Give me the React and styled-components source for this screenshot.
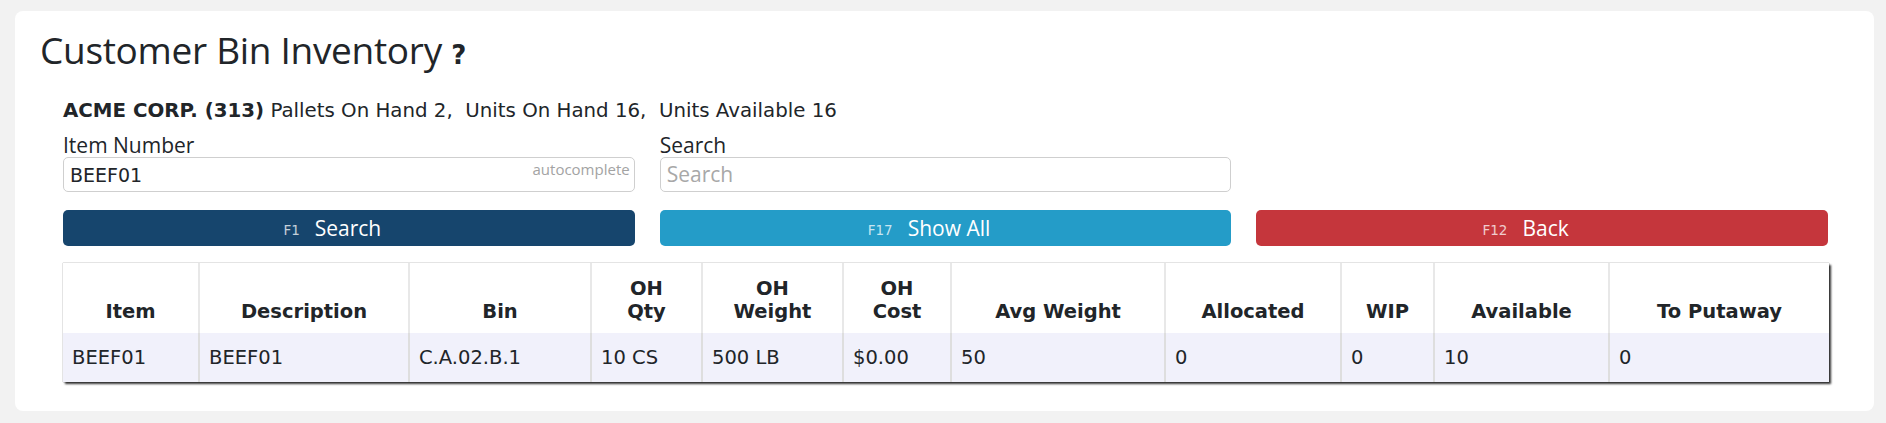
import styled, { createGlobalStyle } from 'styled-components'

const GlobalStyle = createGlobalStyle`
  html, body {
    margin: 0;
    padding: 0;
    background: #f2f2f2;
  }
  body {
    font-family: 'DejaVu Sans', Verdana, sans-serif;
    color: #212529;
  }
`

const columns = [
  { key: 'item', label: 'Item', width: 136 },
  { key: 'desc', label: 'Description', width: 210 },
  { key: 'bin', label: 'Bin', width: 182 },
  { key: 'qty', label: ['OH', 'Qty'], width: 111 },
  { key: 'weight', label: ['OH', 'Weight'], width: 141 },
  { key: 'cost', label: ['OH', 'Cost'], width: 108 },
  { key: 'avg', label: 'Avg Weight', width: 214 },
  { key: 'alloc', label: 'Allocated', width: 176 },
  { key: 'wip', label: 'WIP', width: 93 },
  { key: 'avail', label: 'Available', width: 175 },
  { key: 'putaway', label: 'To Putaway', width: 220 },
]

const rows = [
  {
    item: 'BEEF01',
    desc: 'BEEF01',
    bin: 'C.A.02.B.1',
    qty: '10 CS',
    weight: '500 LB',
    cost: '$0.00',
    avg: '50',
    alloc: '0',
    wip: '0',
    avail: '10',
    putaway: '0',
  },
]

const buttons = [
  { key: 'F1', text: 'Search', variant: 'primary' },
  { key: 'F17', text: 'Show All', variant: 'info' },
  { key: 'F12', text: 'Back', variant: 'danger' },
]

const App = () => {
  return (
    <>
      <GlobalStyle />
      <Page>
        <Card>
          <Title>
            Customer Bin Inventory <Help>?</Help>
          </Title>
          <Content>
            <Summary>
              <strong>ACME CORP. (313)</strong> Pallets On Hand 2,&nbsp; Units On Hand 16,&nbsp; Units Available 16
            </Summary>
            <Grid>
              <Field>
                <Label>Item Number</Label>
                <InputWrap>
                  <Input defaultValue='BEEF01' />
                  <Hint>autocomplete</Hint>
                </InputWrap>
              </Field>
              <Field>
                <Label>Search</Label>
                <Input placeholder='Search' />
              </Field>
            </Grid>
            <ButtonGrid>
              {buttons.map((b) => (
                <KeyButton key={b.key} $variant={b.variant}>
                  <KeyHint>{b.key}</KeyHint>
                  {b.text}
                </KeyButton>
              ))}
            </ButtonGrid>
            <Table>
              <colgroup>
                {columns.map((c) => (
                  <Col key={c.key} $width={c.width} />
                ))}
              </colgroup>
              <thead>
                <tr>
                  {columns.map((c) => (
                    <Th key={c.key}>
                      {Array.isArray(c.label) ? (
                        <>
                          {c.label[0]}
                          <br />
                          {c.label[1]}
                        </>
                      ) : (
                        c.label
                      )}
                    </Th>
                  ))}
                </tr>
              </thead>
              <tbody>
                {rows.map((r, i) => (
                  <tr key={i}>
                    {columns.map((c) => (
                      <Td key={c.key}>{r[c.key]}</Td>
                    ))}
                  </tr>
                ))}
              </tbody>
            </Table>
          </Content>
        </Card>
      </Page>
    </>
  )
}

const variants = {
  primary: '#16456d',
  info: '#249cc8',
  danger: '#c5363c',
}

const Page = styled.div`
  width: 1886px;
  height: 423px;
  box-sizing: border-box;
  padding: 11px 12px 12px 15px;
`

const Card = styled.section`
  background: #fff;
  border-radius: 8px;
  height: 100%;
  box-sizing: border-box;
  padding: 17px 46px 0 25px;
`

const Title = styled.h1`
  margin: 0;
  font-family: 'Open Sans', sans-serif;
  font-weight: 400;
  font-size: 37px;
  line-height: 44px;
  color: #212529;
  letter-spacing: -0.3px;
`

const Help = styled.span`
  font-family: 'DejaVu Sans', sans-serif;
  font-weight: 700;
  font-size: 26px;
`

const Content = styled.div`
  margin-left: 23px;
`

const Summary = styled.p`
  margin: 21px 0 9px;
  font-size: 19.8px;
  line-height: 26px;
  strong {
    font-weight: 700;
  }
`

const Grid = styled.div`
  display: grid;
  grid-template-columns: repeat(3, 1fr);
  column-gap: 25px;
`

const Field = styled.div`
  display: flex;
  flex-direction: column;
`

const Label = styled.label`
  font-family: 'Open Sans', sans-serif;
  font-size: 21px;
  line-height: 24px;
  color: #212529;
`

const InputWrap = styled.div`
  position: relative;
`

const Input = styled.input`
  width: 100%;
  height: 35px;
  box-sizing: border-box;
  border: 1px solid #cfcfcf;
  border-radius: 5px;
  padding: 0 6px;
  font-family: 'DejaVu Sans', sans-serif;
  font-size: 19px;
  color: #212529;
  outline: none;
  &::placeholder {
    font-family: 'Open Sans', sans-serif;
    font-size: 21px;
    color: #a8a8a8;
  }
`

const Hint = styled.span`
  position: absolute;
  right: 5px;
  top: 2px;
  font-family: 'Open Sans', sans-serif;
  font-size: 15px;
  color: #a3a3a3;
`

const ButtonGrid = styled.div`
  display: grid;
  grid-template-columns: repeat(3, 1fr);
  column-gap: 25px;
  margin-top: 18px;
`

const KeyButton = styled.button`
  height: 36px;
  border: none;
  border-radius: 5px;
  background: ${(p) => variants[p.$variant]};
  color: #fff;
  font-family: 'Open Sans', sans-serif;
  font-size: 21px;
  display: flex;
  align-items: center;
  justify-content: center;
  gap: 15px;
  padding: 0 33px 0 0;
  cursor: pointer;
`

const KeyHint = styled.span`
  font-family: 'DejaVu Sans', sans-serif;
  font-size: 13.5px;
  color: rgba(255, 255, 255, 0.75);
  padding-top: 4px;
`

const Table = styled.table`
  margin-top: 17px;
  width: 100%;
  table-layout: fixed;
  border-collapse: collapse;
  box-shadow: 2px 2px 2px rgba(0, 0, 0, 0.8), 0 0 1px rgba(0, 0, 0, 0.6);
`

const Col = styled.col`
  width: ${(p) => p.$width}px;
`

const Th = styled.th`
  height: 70px;
  box-sizing: border-box;
  background: #fff;
  font-size: 19.5px;
  font-weight: 700;
  line-height: 23px;
  text-align: center;
  vertical-align: bottom;
  padding: 0 4px 10px;
  border-left: 2px solid #e8e8e8;
  &:first-child {
    border-left: none;
  }
`

const Td = styled.td`
  height: 49px;
  box-sizing: border-box;
  background: #f1f1fb;
  font-size: 19.5px;
  padding: 0 9px;
  border-left: 2px solid #dedede;
  &:first-child {
    border-left: none;
  }
`

export default App
